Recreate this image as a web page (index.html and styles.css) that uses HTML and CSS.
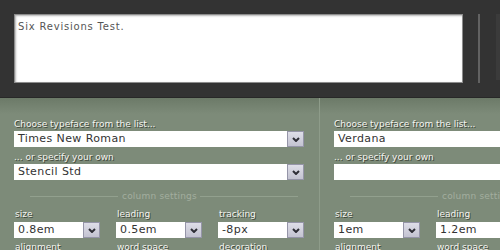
FILE: index.html
```html
<!DOCTYPE html>
<html>
<head>
<meta charset="utf-8">
<link rel="stylesheet" href="styles.css">
</head>
<body>
<div class="top">
  <div class="preview">Six Revisions Test.</div>
  <div class="scrollbar"></div>
  <div class="side"></div>
</div>
<div class="panels">
  <section class="panel">
    <label class="lbl">Choose typeface from the list...</label>
    <div class="select wide"><span class="val">Times New Roman</span><span class="btn"><svg width="8" height="5" viewBox="0 0 8 5"><path d="M1 1 L4 4 L7 1" fill="none" stroke="#2e2e36" stroke-width="2"/></svg></span></div>
    <label class="lbl second">... or specify your own</label>
    <div class="select wide"><span class="val">Stencil Std</span><span class="btn"><svg width="8" height="5" viewBox="0 0 8 5"><path d="M1 1 L4 4 L7 1" fill="none" stroke="#2e2e36" stroke-width="2"/></svg></span></div>
    <div class="sep"><span class="line l"></span><span class="sep-text">column settings</span><span class="line r"></span></div>
    <div class="row">
      <div class="field"><label class="lbl">size</label><div class="select"><span class="val">0.8em</span><span class="btn"><svg width="8" height="5" viewBox="0 0 8 5"><path d="M1 1 L4 4 L7 1" fill="none" stroke="#2e2e36" stroke-width="2"/></svg></span></div></div>
      <div class="field"><label class="lbl">leading</label><div class="select"><span class="val">0.5em</span><span class="btn"><svg width="8" height="5" viewBox="0 0 8 5"><path d="M1 1 L4 4 L7 1" fill="none" stroke="#2e2e36" stroke-width="2"/></svg></span></div></div>
      <div class="field"><label class="lbl">tracking</label><div class="select"><span class="val">-8px</span><span class="btn"><svg width="8" height="5" viewBox="0 0 8 5"><path d="M1 1 L4 4 L7 1" fill="none" stroke="#2e2e36" stroke-width="2"/></svg></span></div></div>
    </div>
    <div class="row">
      <div class="field"><label class="lbl">alignment</label><div class="select"><span class="val">left</span><span class="btn"></span></div></div>
      <div class="field"><label class="lbl">word space</label><div class="select"><span class="val">0</span><span class="btn"></span></div></div>
      <div class="field"><label class="lbl">decoration</label><div class="select"><span class="val">none</span><span class="btn"></span></div></div>
    </div>
  </section>
  <section class="panel">
    <label class="lbl">Choose typeface from the list...</label>
    <div class="select wide"><span class="val">Verdana</span><span class="btn"><svg width="8" height="5" viewBox="0 0 8 5"><path d="M1 1 L4 4 L7 1" fill="none" stroke="#2e2e36" stroke-width="2"/></svg></span></div>
    <label class="lbl second">... or specify your own</label>
    <div class="select wide"><span class="val"></span><span class="btn"><svg width="8" height="5" viewBox="0 0 8 5"><path d="M1 1 L4 4 L7 1" fill="none" stroke="#2e2e36" stroke-width="2"/></svg></span></div>
    <div class="sep"><span class="line l"></span><span class="sep-text">column settings</span><span class="line r"></span></div>
    <div class="row">
      <div class="field"><label class="lbl">size</label><div class="select"><span class="val">1em</span><span class="btn"><svg width="8" height="5" viewBox="0 0 8 5"><path d="M1 1 L4 4 L7 1" fill="none" stroke="#2e2e36" stroke-width="2"/></svg></span></div></div>
      <div class="field"><label class="lbl">leading</label><div class="select"><span class="val">1.2em</span><span class="btn"><svg width="8" height="5" viewBox="0 0 8 5"><path d="M1 1 L4 4 L7 1" fill="none" stroke="#2e2e36" stroke-width="2"/></svg></span></div></div>
      <div class="field"><label class="lbl">tracking</label><div class="select"><span class="val">0px</span><span class="btn"><svg width="8" height="5" viewBox="0 0 8 5"><path d="M1 1 L4 4 L7 1" fill="none" stroke="#2e2e36" stroke-width="2"/></svg></span></div></div>
    </div>
    <div class="row">
      <div class="field"><label class="lbl">alignment</label><div class="select"><span class="val">left</span><span class="btn"></span></div></div>
      <div class="field"><label class="lbl">word space</label><div class="select"><span class="val">0</span><span class="btn"></span></div></div>
      <div class="field"><label class="lbl">decoration</label><div class="select"><span class="val">none</span><span class="btn"></span></div></div>
    </div>
  </section>
</div>
</body>
</html>
```
FILE: styles.css
```css
html, body {
  margin: 0;
  padding: 0;
  overflow: hidden;
  width: 500px;
  height: 250px;
}
body {
  background: #7d8b79;
  font-family: "DejaVu Sans", Verdana, sans-serif;
}
.top {
  background: #333333;
  height: 83px;
  padding: 14px 0 0 14px;
  border-bottom: 1px solid #282828;
  display: flex;
  align-items: flex-start;
}
.preview {
  flex: none;
  box-sizing: border-box;
  width: 449px;
  height: 69px;
  background: #fff;
  border: 1px solid #8c8c8c;
  box-shadow: inset 1px 1px 2px #b5b5b5;
  padding: 6px 3px;
  font-size: 10px;
  letter-spacing: 0.8px;
  color: #555;
}
.scrollbar {
  flex: none;
  width: 2px;
  height: 69px;
  margin-left: 15px;
  background: #626262;
}
.side {
  flex: none;
  width: 20px;
  height: 66px;
  margin-left: 16px;
  background: #3b3b3b;
}
.panels {
  display: grid;
  grid-template-columns: 320px 320px;
  background: linear-gradient(#6c7a68, #7d8b79 16px);
  height: 152px;
}
.panel {
  box-sizing: border-box;
  padding: 20px 0 0 14px;
  display: flex;
  flex-direction: column;
  align-items: flex-start;
}
.panel:first-child {
  border-right: 1px solid #8e9c8a;
  width: 320px;
}
.lbl {
  display: block;
  font-size: 9px;
  line-height: 12px;
  color: #f4f4f0;
  text-shadow: 1px 1px 0 #3d483a;
  height: 12px;
}
.lbl.second {
  margin-top: 4px;
}
.select {
  margin-top: 1px;
  box-sizing: border-box;
  width: 86px;
  height: 16px;
  background: #fff;
  display: flex;
  justify-content: space-between;
  align-items: stretch;
}
.select.wide {
  width: 290px;
}
.val {
  padding-left: 4px;
  font-size: 11px;
  line-height: 16px;
  letter-spacing: 0.4px;
  color: #333;
  white-space: nowrap;
}
.btn {
  box-sizing: border-box;
  width: 17px;
  height: 16px;
  background: linear-gradient(#dedee8, #c3c3d1);
  border: 1px solid #9595a8;
  display: flex;
  align-items: center;
  justify-content: center;
}
.sep {
  width: 290px;
  height: 12px;
  margin-top: 10px;
  display: flex;
  align-items: center;
}
.line {
  height: 1px;
  background: #92a08e;
}
.line.l {
  width: 88px;
  margin-left: 16px;
  margin-right: 4px;
}
.line.r {
  flex: 1;
  margin-left: 3px;
  margin-right: 6px;
}
.sep-text {
  font-size: 9px;
  color: #a3ae9f;
  letter-spacing: 0.2px;
  white-space: nowrap;
}
.row {
  margin-top: 6px;
  display: flex;
  gap: 16px;
}
.row + .row {
  margin-top: 3px;
}
.field {
  display: flex;
  flex-direction: column;
}
.field .lbl {
  padding-left: 1px;
}
.field .select {
  margin-top: 2px;
}
```
